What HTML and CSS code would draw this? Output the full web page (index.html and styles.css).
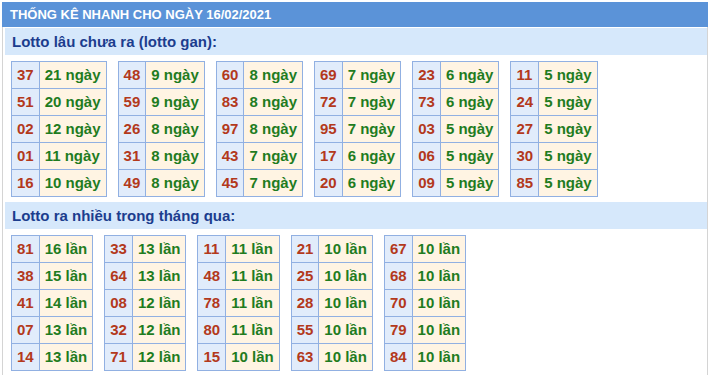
FILE: index.html
```html
<!DOCTYPE html>
<html lang="vi">
<head>
<meta charset="utf-8">
<title>Thống kê nhanh</title>
<link rel="stylesheet" href="styles.css">
</head>
<body>
<div class="box">
  <div class="head">THỐNG KÊ NHANH CHO NGÀY 16/02/2021</div>
  <div class="body">
    <div class="sub">Lotto lâu chưa ra (lotto gan):</div>
    <div class="tables">
      <table class="t"><tr><td class="n">37</td><td class="v">21 ngày</td></tr><tr><td class="n">51</td><td class="v">20 ngày</td></tr><tr><td class="n">02</td><td class="v">12 ngày</td></tr><tr><td class="n">01</td><td class="v">11 ngày</td></tr><tr><td class="n">16</td><td class="v">10 ngày</td></tr></table>
      <table class="t"><tr><td class="n">48</td><td class="v">9 ngày</td></tr><tr><td class="n">59</td><td class="v">9 ngày</td></tr><tr><td class="n">26</td><td class="v">8 ngày</td></tr><tr><td class="n">31</td><td class="v">8 ngày</td></tr><tr><td class="n">49</td><td class="v">8 ngày</td></tr></table>
      <table class="t"><tr><td class="n">60</td><td class="v">8 ngày</td></tr><tr><td class="n">83</td><td class="v">8 ngày</td></tr><tr><td class="n">97</td><td class="v">8 ngày</td></tr><tr><td class="n">43</td><td class="v">7 ngày</td></tr><tr><td class="n">45</td><td class="v">7 ngày</td></tr></table>
      <table class="t"><tr><td class="n">69</td><td class="v">7 ngày</td></tr><tr><td class="n">72</td><td class="v">7 ngày</td></tr><tr><td class="n">95</td><td class="v">7 ngày</td></tr><tr><td class="n">17</td><td class="v">6 ngày</td></tr><tr><td class="n">20</td><td class="v">6 ngày</td></tr></table>
      <table class="t"><tr><td class="n">23</td><td class="v">6 ngày</td></tr><tr><td class="n">73</td><td class="v">6 ngày</td></tr><tr><td class="n">03</td><td class="v">5 ngày</td></tr><tr><td class="n">06</td><td class="v">5 ngày</td></tr><tr><td class="n">09</td><td class="v">5 ngày</td></tr></table>
      <table class="t"><tr><td class="n">11</td><td class="v">5 ngày</td></tr><tr><td class="n">24</td><td class="v">5 ngày</td></tr><tr><td class="n">27</td><td class="v">5 ngày</td></tr><tr><td class="n">30</td><td class="v">5 ngày</td></tr><tr><td class="n">85</td><td class="v">5 ngày</td></tr></table>
    </div>
    <div class="sub">Lotto ra nhiều trong tháng qua:</div>
    <div class="tables">
      <table class="t"><tr><td class="n">81</td><td class="v">16 lần</td></tr><tr><td class="n">38</td><td class="v">15 lần</td></tr><tr><td class="n">41</td><td class="v">14 lần</td></tr><tr><td class="n">07</td><td class="v">13 lần</td></tr><tr><td class="n">14</td><td class="v">13 lần</td></tr></table>
      <table class="t"><tr><td class="n">33</td><td class="v">13 lần</td></tr><tr><td class="n">64</td><td class="v">13 lần</td></tr><tr><td class="n">08</td><td class="v">12 lần</td></tr><tr><td class="n">32</td><td class="v">12 lần</td></tr><tr><td class="n">71</td><td class="v">12 lần</td></tr></table>
      <table class="t"><tr><td class="n">11</td><td class="v">11 lần</td></tr><tr><td class="n">48</td><td class="v">11 lần</td></tr><tr><td class="n">78</td><td class="v">11 lần</td></tr><tr><td class="n">80</td><td class="v">11 lần</td></tr><tr><td class="n">15</td><td class="v">10 lần</td></tr></table>
      <table class="t"><tr><td class="n">21</td><td class="v">10 lần</td></tr><tr><td class="n">25</td><td class="v">10 lần</td></tr><tr><td class="n">28</td><td class="v">10 lần</td></tr><tr><td class="n">55</td><td class="v">10 lần</td></tr><tr><td class="n">63</td><td class="v">10 lần</td></tr></table>
      <table class="t"><tr><td class="n">67</td><td class="v">10 lần</td></tr><tr><td class="n">68</td><td class="v">10 lần</td></tr><tr><td class="n">70</td><td class="v">10 lần</td></tr><tr><td class="n">79</td><td class="v">10 lần</td></tr><tr><td class="n">84</td><td class="v">10 lần</td></tr></table>
    </div>
  </div>
</div>
</body>
</html>
```
FILE: styles.css
```css
html, body {
  margin: 0;
  padding: 0;
  background: #ffffff;
}
body {
  font-family: "Liberation Sans", Arial, sans-serif;
  font-weight: bold;
}
.box {
  margin: 2px 1px 0 2px;
  width: 706px;
}
.head {
  height: 25px;
  line-height: 26px;
  background: #5b93d8;
  color: #ffffff;
  font-size: 13px;
  padding-left: 8px;
}
.body {
  border-left: 1px solid #d4d4d4;
  border-right: 1px solid #d4d4d4;
  padding: 1px 0 6px 2px;
}
.sub {
  height: 27px;
  line-height: 27px;
  background: #d6e8fb;
  color: #1c3d8e;
  font-size: 15px;
  padding-left: 7px;
}
.tables {
  display: flex;
  gap: 11px;
  align-items: flex-start;
  padding: 6px 0 5px 6px;
}
.t {
  border-collapse: collapse;
  font-size: 15px;
}
.t td {
  border: 1px solid #91b0e2;
  height: 18px;
  line-height: 18px;
  padding: 4px 5px 4px 5px;
  white-space: nowrap;
}
.t .n {
  background: #e1ecfb;
  color: #b3391c;
}
.t .v {
  background: #fff4e3;
  color: #1f7c1f;
}
```
